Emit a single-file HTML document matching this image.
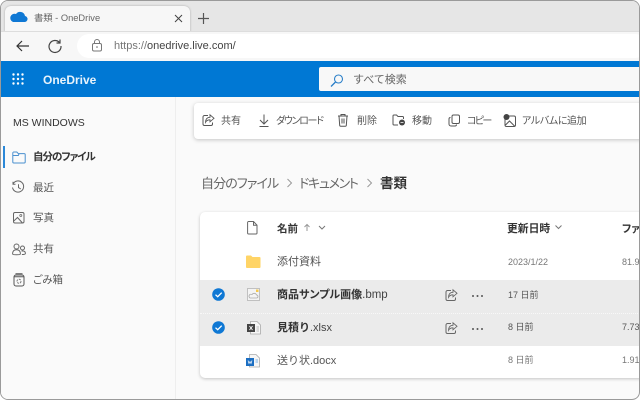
<!DOCTYPE html>
<html lang="ja"><head><meta charset="utf-8">
<style>
html,body{margin:0;padding:0;background:#fff}
body{width:640px;height:400px;overflow:hidden;position:relative;font-family:"Liberation Sans","Noto Sans CJK JP",sans-serif;color:#333}
#win{position:absolute;left:0;top:0;width:638px;height:398px;border:1px solid #9a9a9a;border-radius:8px;overflow:hidden;background:#fafafa}
#in{position:absolute;left:-1px;top:0;width:640px;height:398px}
.a{position:absolute;white-space:nowrap}
svg{position:absolute;overflow:visible;fill:none}
.t{font-size:10.5px;line-height:14px;color:#555}
.b{font-weight:bold;color:#333}
.p{font-feature-settings:"palt"}
.c{font-size:10px;top:114px}
.d{font-size:9px;line-height:12px}
.f{font-size:11px}
</style></head><body>
<div id="win"><div id="in">
<div class="a" style="left:0;top:0;width:640px;height:30px;background:#e6e6e6"></div>
<div class="a" style="left:5px;top:5px;width:185px;height:26px;background:#f7f7f7;border-radius:6px 6px 0 0;box-shadow:0 0 2px #aaa"></div>
<div class="a" style="left:0;top:30px;width:640px;height:30px;background:#f7f7f7;border-top:1px solid #ddd;box-sizing:border-box"></div>
<svg style="left:0;top:0" width="60" height="30"><path d="M15 22h9a3 3 0 0 0 1-6 5 5 0 0 0-9-2 4 4 0 0 0-3 8z" fill="#0f78d4" transform="translate(0,-1)"/></svg>
<div class="a" style="left:34px;top:10px;font-size:9.300px;line-height:14px;color:#666">書類 - OneDrive</div>
<svg style="left:174px;top:13px" width="10" height="10"><path d="M1 1l7 7M8 1l-7 7" stroke="#444" stroke-width="1"/></svg>
<svg style="left:197px;top:11px" width="13" height="13"><path d="M6.500 1v11M1 6.500h11" stroke="#555" stroke-width="1.200"/></svg>
<svg style="left:15px;top:38px" width="15" height="14"><path d="M14 7H2M7 2L2 7l5 5" stroke="#333" stroke-width="1.200"/></svg>
<svg style="left:48px;top:38px" width="14" height="14"><path d="M11.500 3.500A6 6 0 1 0 13 7M12 .5v3.500H8.500" stroke="#444" stroke-width="1.200"/></svg>
<div class="a" style="left:77px;top:33px;width:570px;height:24px;background:#fff;border-radius:12px"></div>
<svg style="left:91px;top:38px" width="12" height="13"><rect x="1.500" y="4.500" width="9" height="7.500" rx="1.500" stroke="#777"/><path d="M3.500 4.500V3a2.500 2.500 0 0 1 5 0v1.500" stroke="#777"/><circle cx="6" cy="8" r=".8" fill="#666"/></svg>
<div class="a" style="left:114px;top:38px;font-size:11px;line-height:14px;color:#444"><span style="color:#777">https://</span>onedrive.live.com/</div>
<div class="a" style="left:0;top:60px;width:640px;height:36px;background:#0078d4"></div>
<svg style="left:12px;top:72px" width="13" height="13"><g fill="#fff"><circle cx="1.500" cy="1.500" r="1.200"/><circle cx="6" cy="1.500" r="1.200"/><circle cx="10.500" cy="1.500" r="1.200"/><circle cx="1.500" cy="6" r="1.200"/><circle cx="6" cy="6" r="1.200"/><circle cx="10.500" cy="6" r="1.200"/><circle cx="1.500" cy="10.500" r="1.200"/><circle cx="6" cy="10.500" r="1.200"/><circle cx="10.500" cy="10.500" r="1.200"/></g></svg>
<div class="a" style="left:43px;top:71px;font-size:12px;line-height:16px;font-weight:bold;color:#e8f3fb">OneDrive</div>
<div class="a" style="left:319px;top:66px;width:330px;height:24px;background:#f8f8f8;border-radius:2px"></div>
<svg style="left:330px;top:73px" width="14" height="14"><circle cx="8.500" cy="5" r="4" stroke="#2a7fc8" stroke-width="1.100"/><path d="M5.500 8L1 12.500" stroke="#2a7fc8" stroke-width="1.300"/></svg>
<div class="a" style="left:353px;top:72px;font-size:11px;line-height:15px;color:#666">すべて検索</div>

<div class="a" style="left:0;top:96px;width:175px;height:302px;background:#fafafa;border-right:1px solid #eee"></div>
<div class="a" style="left:13px;top:115px;font-size:10.500px;line-height:14px;color:#333">MS WINDOWS</div>
<div class="a" style="left:3px;top:145px;width:2px;height:22px;background:#2b88d8"></div>
<svg style="left:12px;top:150px" width="14" height="13"><path d="M.8 11V2a1 1 0 0 1 1-1h3l1.500 1.600h5.900a1 1 0 0 1 1 1V11a1 1 0 0 1-1 1H1.800a1 1 0 0 1-1-1zM.8 4.500H6.300L7 3" stroke="#4a90cf" stroke-width="1"/></svg>
<div class="a t b p" style="left:33px;top:149px;letter-spacing:-1px">自分のファイル</div>
<svg style="left:12px;top:180px" width="13" height="13"><path d="M1 3a5.600 5.600 0 1 1-.5 3.500M1 .8V3.300h2.500M6.500 3.300v3.300l2.300 1.400" stroke="#666"/></svg>
<div class="a t" style="left:33px;top:180px">最近</div>
<svg style="left:13px;top:211px" width="12" height="12"><rect x=".5" y=".5" width="10.500" height="10.500" rx="1.500" stroke="#666"/><path d="M.8 9L4.500 5.500 9.500 11" stroke="#666"/><circle cx="7.800" cy="3.500" r="1" stroke="#666" stroke-width=".8"/></svg>
<div class="a t" style="left:33px;top:210px">写真</div>
<svg style="left:12px;top:242px" width="14" height="13"><circle cx="4.500" cy="3.500" r="2.500" stroke="#666"/><circle cx="10.500" cy="5" r="2" stroke="#666"/><path d="M.6 11c0-3 1.500-4.200 3.900-4.200s3.900 1.200 3.900 4.200c0 1-7.800 1-7.800 0zM9.500 8h1.500c1.800 0 2.400 1 2.400 2.500 0 1-2 1-3.500 1" stroke="#666"/></svg>
<div class="a t" style="left:33px;top:241px">共有</div>
<svg style="left:13px;top:272px" width="12" height="14"><rect x="1" y="2" width="10" height="11" rx="2" stroke="#555"/><path d="M2.500 .8h7M1 3.800h10" stroke="#555"/><circle cx="6" cy="8.300" r="2" stroke="#777" stroke-dasharray="2 1"/></svg>
<div class="a t p" style="left:33px;top:272px">ごみ箱</div>

<div class="a" style="left:194px;top:102px;width:460px;height:36px;background:#fff;border-radius:4px;box-shadow:0 1px 4px rgba(0,0,0,.22)"></div>
<svg style="left:202px;top:113px" width="13" height="13"><path d="M6 1.500H2.500a1.500 1.500 0 0 0-1.500 1.500V10a1.500 1.500 0 0 0 1.500 1.500H9A1.500 1.500 0 0 0 10.500 10V8.500" stroke="#555"/><path d="M8 .8l4 3.500-4 3.500V5.800c-2 0-3.500.7-4.500 2.500 0-3 1.500-5 4.500-5z" stroke="#555" stroke-width=".9"/></svg>
<div class="a t c" style="left:221px">共有</div>
<svg style="left:258px;top:113px" width="12" height="13"><path d="M6 .5v9M2 6l4 4 4-4M1.500 12.500h9" stroke="#555"/></svg>
<div class="a t c p" style="left:276px;letter-spacing:-1.300px">ダウンロード</div>
<svg style="left:337px;top:112px" width="12" height="14"><path d="M1 3h10M4 3V1.500h4V3M2 3l.7 9.500a1 1 0 0 0 1 .8h4.600a1 1 0 0 0 1-.8L10 3M5 5.500v5M7 5.500v5" stroke="#555"/></svg>
<div class="a t c" style="left:357px">削除</div>
<svg style="left:392px;top:113px" width="14" height="13"><path d="M6 11H2a1 1 0 0 1-1-1V2a1 1 0 0 1 1-1h2.500L6 2.500h4.500a1 1 0 0 1 1 1V5" stroke="#555"/><circle cx="10" cy="8.500" r="3" fill="#444"/><path d="M8.500 8.500h3" stroke="#fff" stroke-width=".8"/></svg>
<div class="a t c" style="left:412px">移動</div>
<svg style="left:448px;top:113px" width="13" height="13"><rect x="4" y="1" width="7.500" height="8.500" rx="1.500" stroke="#555"/><path d="M2.500 3.500A1.500 1.500 0 0 0 1 5v5a2 2 0 0 0 2 2h4a1.500 1.500 0 0 0 1.500-1.500" stroke="#555"/></svg>
<div class="a t c p" style="left:467px;letter-spacing:-1.700px">コピー</div>
<svg style="left:503px;top:113px" width="14" height="13"><rect x="2" y="2" width="10.500" height="10.500" rx="1.500" stroke="#555"/><path d="M2.500 11l4-4 5 5" stroke="#555"/><circle cx="3.500" cy="3" r="3" fill="#444"/></svg>
<div class="a t c p" style="left:522px;letter-spacing:-.4px">アルバムに追加</div>

<div class="a p" style="left:201px;top:175px;font-size:13px;line-height:16px;color:#666;letter-spacing:-.9px">自分のファイル</div>
<svg style="left:286px;top:177px" width="7" height="10"><path d="M1.500 1l4 4-4 4" stroke="#999"/></svg>
<div class="a p" style="left:299px;top:175px;font-size:13px;line-height:16px;color:#666;letter-spacing:-1.300px">ドキュメント</div>
<svg style="left:366px;top:177px" width="7" height="10"><path d="M1.500 1l4 4-4 4" stroke="#999"/></svg>
<div class="a" style="left:380px;top:175px;font-size:13.500px;line-height:16px;font-weight:bold;color:#333">書類</div>

<div class="a" style="left:200px;top:211px;width:460px;height:166px;background:#fff;border-radius:5px;box-shadow:0 1px 3px rgba(0,0,0,.22);overflow:hidden">
  <div class="a" style="left:0;top:68px;width:460px;height:33px;background:#ebebeb"></div>
  <div class="a" style="left:0;top:101px;width:460px;height:33px;background:#ebebeb;border-top:1px dotted #f8f8f8;box-sizing:border-box"></div>
</div>
<svg style="left:247px;top:220px" width="11" height="14"><path d="M.6 1.500a1 1 0 0 1 1-1H6.500L10 4.200V12a1 1 0 0 1-1 1H1.600a1 1 0 0 1-1-1zM6.500.5v3.700H10" stroke="#666"/></svg>
<div class="a t b" style="left:277px;top:221px">名前</div>
<svg style="left:303px;top:222px" width="22" height="10"><path d="M4 8V1.500M1.500 4L4 1.500 6.500 4" stroke="#999"/><path d="M16 3l3 3 3-3" stroke="#777"/></svg>
<div class="a t b" style="left:507px;top:221px;font-size:10.800px">更新日時</div>
<svg style="left:555px;top:222px" width="8" height="8"><path d="M.5 2.500l3 3 3-3" stroke="#777"/></svg>
<div class="a t b p" style="left:622px;top:221px">ファイル</div>

<svg style="left:246px;top:254px" width="15" height="13"><path d="M0 1.500a1 1 0 0 1 1-1h4L6.500 2H13.500a1 1 0 0 1 1 1v9a1 1 0 0 1-1 1H1a1 1 0 0 1-1-1z" fill="#ffd466"/></svg>
<div class="a t f" style="left:277px;top:254px">添付資料</div>
<div class="a t d" style="left:508px;top:255px;color:#777">2023/1/22</div>
<div class="a t d" style="left:622px;top:255px;color:#777">81.9</div>

<svg style="left:212px;top:287px" width="14" height="14"><circle cx="6.500" cy="6.500" r="6.300" fill="#0f78d4"/><path d="M3.500 6.700l2.200 2 4-4" stroke="#fff" stroke-width="1.300"/></svg>
<svg style="left:247px;top:287px" width="14" height="14"><rect x=".5" y=".5" width="12" height="12" fill="#f4f4f4" stroke="#b5b5b5" stroke-width=".8"/><path d="M3 10h6.500a1.500 1.500 0 0 0 0-3A2.500 2.500 0 0 0 5 6.500 2 2 0 0 0 3 10z" stroke="#aaa" stroke-width=".8"/><rect x="9" y="1.500" width="2.500" height="2.500" fill="#f5c84a"/></svg>
<div class="a t b f p" style="left:277px;top:287px">商品サンプル画像<span style="font-weight:normal;color:#444;font-size:11.500px">.bmp</span></div>
<svg style="left:445px;top:288px" width="13" height="13"><path d="M6 1.500H2.500a1.500 1.500 0 0 0-1.500 1.500V10a1.500 1.500 0 0 0 1.500 1.500H9A1.500 1.500 0 0 0 10.500 10V8.500" stroke="#666"/><path d="M8 .8l4 3.500-4 3.500V5.800c-2 0-3.500.7-4.500 2.500 0-3 1.500-5 4.500-5z" stroke="#666" stroke-width=".9"/></svg>
<svg style="left:472px;top:294px" width="11" height="3"><g fill="#555"><circle cx="1" cy="1" r="1"/><circle cx="5.500" cy="1" r="1"/><circle cx="10" cy="1" r="1"/></g></svg>
<div class="a t d" style="left:508px;top:288px">17 日前</div>

<svg style="left:212px;top:320px" width="14" height="14"><circle cx="6.500" cy="6.500" r="6.300" fill="#0f78d4"/><path d="M3.500 6.700l2.200 2 4-4" stroke="#fff" stroke-width="1.300"/></svg>
<svg style="left:247px;top:320px" width="15" height="14"><path d="M3.500.5H10L13.500 4V13H3.500z" fill="#f6f6f6" stroke="#aaa" stroke-width=".8"/><rect x="0" y="3" width="8" height="8" fill="#444"/><path d="M2.500 5l3 4M5.500 5l-3 4" stroke="#fff" stroke-width=".9"/><path d="M9.500 6h2.500M9.500 8h2.500M9.500 10h2.500" stroke="#bbb"/></svg>
<div class="a t b f" style="left:277px;top:320px">見積り<span style="font-weight:normal;color:#444">.xlsx</span></div>
<svg style="left:445px;top:321px" width="13" height="13"><path d="M6 1.500H2.500a1.500 1.500 0 0 0-1.500 1.500V10a1.500 1.500 0 0 0 1.500 1.500H9A1.500 1.500 0 0 0 10.500 10V8.500" stroke="#666"/><path d="M8 .8l4 3.500-4 3.500V5.800c-2 0-3.500.7-4.500 2.500 0-3 1.500-5 4.500-5z" stroke="#666" stroke-width=".9"/></svg>
<svg style="left:472px;top:327px" width="11" height="3"><g fill="#555"><circle cx="1" cy="1" r="1"/><circle cx="5.500" cy="1" r="1"/><circle cx="10" cy="1" r="1"/></g></svg>
<div class="a t d" style="left:508px;top:320px">8 日前</div>
<div class="a t d" style="left:622px;top:320px">7.73</div>

<svg style="left:246px;top:353px" width="15" height="14"><path d="M3.500.5H10L13.500 4V13H3.500z" fill="#f6f6f6" stroke="#aaa" stroke-width=".8"/><rect x="0" y="4" width="8" height="8" fill="#1b6ec2"/><path d="M2 6.500l1 3 1-2 1 2 1-3" stroke="#fff" stroke-width=".7"/><path d="M9.500 6h2.500M9.500 8h2.500" stroke="#7fb2e5"/></svg>
<div class="a t f" style="left:277px;top:353px">送り状.docx</div>
<div class="a t d" style="left:508px;top:353px;color:#777">8 日前</div>
<div class="a t d" style="left:622px;top:353px;color:#777">1.91</div>
</div></div>
</body></html>
